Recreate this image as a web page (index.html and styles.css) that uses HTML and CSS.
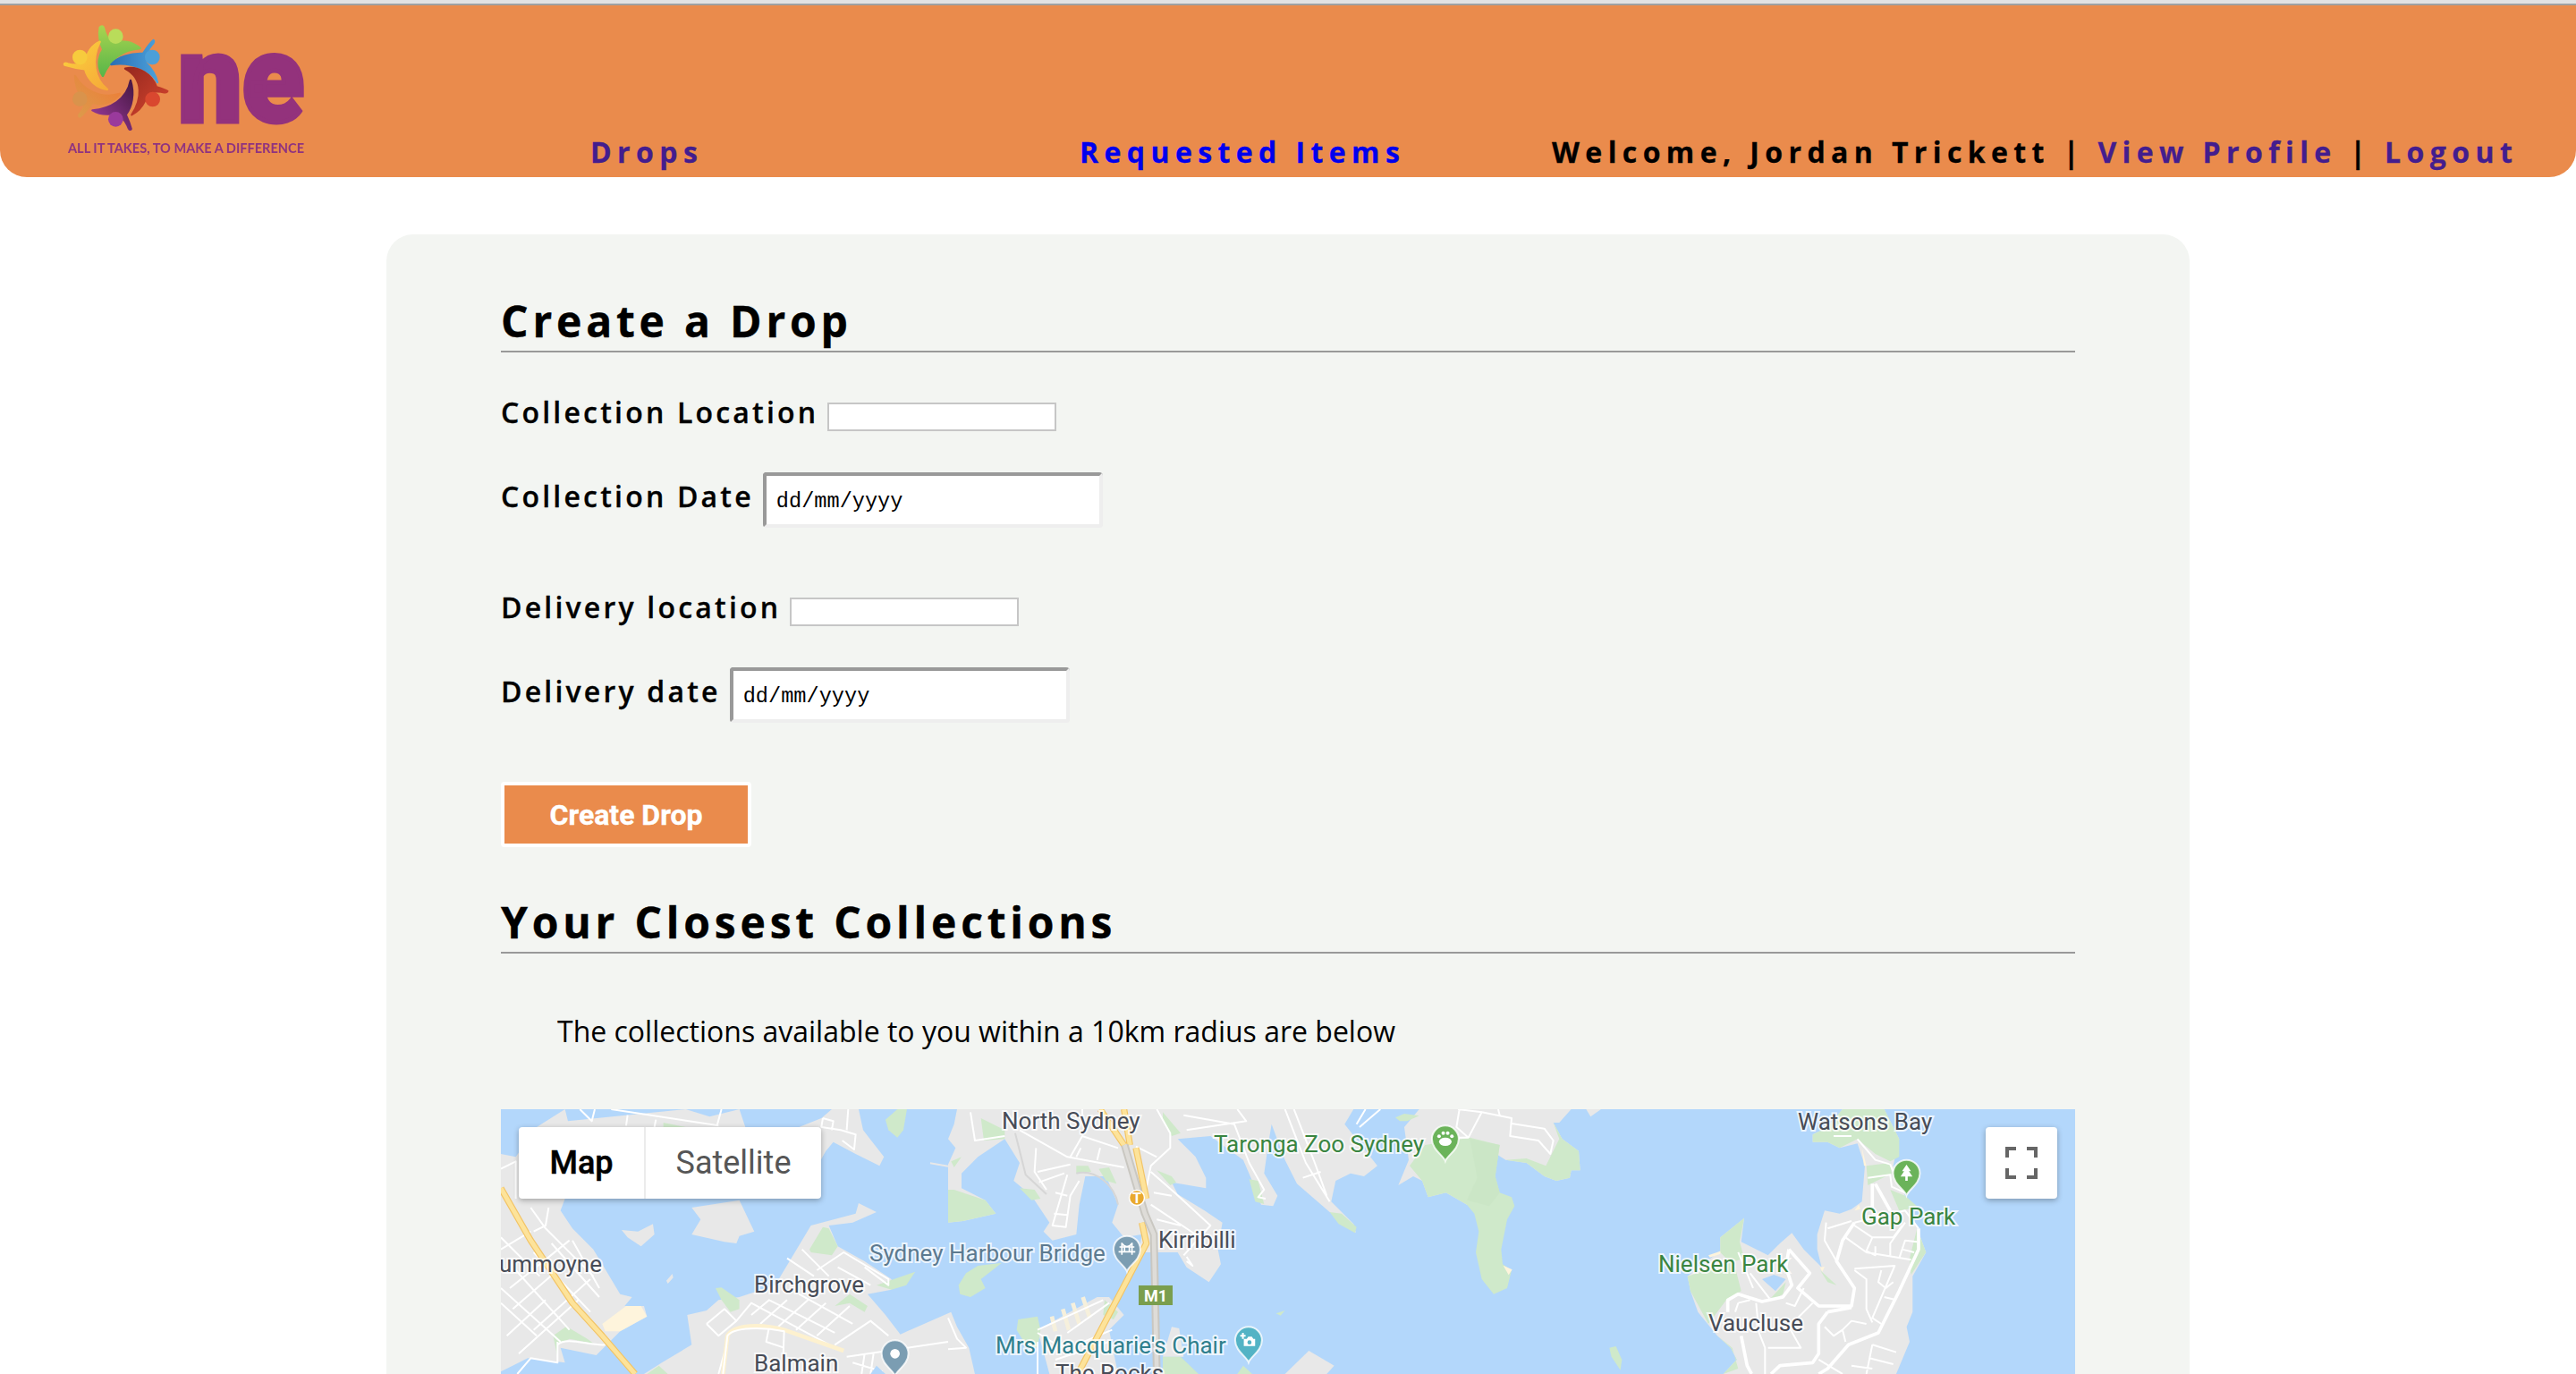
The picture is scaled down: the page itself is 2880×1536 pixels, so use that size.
FILE: index.html
```html
<!DOCTYPE html>
<html lang="en">
<head>
    <meta charset="UTF-8">
    <meta name="viewport" content="width=device-width, initial-scale=1.0">
    <title>Create a Drop</title>
    <link rel="stylesheet" href="styles.css">
</head>
<body>
    <div class="topline"></div>

    <header class="site-header">
        <a class="logo-cell" href="#">
            <svg class="logo" viewBox="60 26 290 150" width="290" height="150">
                <defs>
                    <linearGradient id="g-green" x1="0" y1="0" x2="0" y2="1"><stop offset="0" stop-color="#a8d34f"/><stop offset="1" stop-color="#58b649"/></linearGradient>
                    <linearGradient id="g-blue" x1="0" y1="0" x2="1" y2="0"><stop offset="0" stop-color="#2b6fb5"/><stop offset="1" stop-color="#4ba0da"/></linearGradient>
                    <linearGradient id="g-red" x1="0" y1="0" x2="1" y2="1"><stop offset="0" stop-color="#96281f"/><stop offset="1" stop-color="#d5452e"/></linearGradient>
                    <linearGradient id="g-purple" x1="1" y1="0" x2="0" y2="1"><stop offset="0" stop-color="#461743"/><stop offset="1" stop-color="#a03da0"/></linearGradient>
                    <linearGradient id="g-orange" x1="1" y1="0" x2="0" y2="1"><stop offset="0" stop-color="#ee7a35"/><stop offset="1" stop-color="#dc9b4c"/></linearGradient>
                    <linearGradient id="g-yellow" x1="0" y1="0" x2="1" y2="1"><stop offset="0" stop-color="#fbd23e"/><stop offset="1" stop-color="#f6a938"/></linearGradient>
                </defs>
                <g class="swirl" transform="translate(60 20) scale(.3333)">
                    <path fill="url(#g-green)" stroke="url(#g-green)" d="M155,32 C160,26 166,28 168,34 C172,55 180,72 198,86 C230,72 265,80 290,102 C245,105 195,125 165,195 C148,170 146,135 166,106 C155,85 150,55 155,32Z"/>
                    <circle cx="208" cy="62" r="25" fill="#b9dc5a"/>
                    <path fill="url(#g-blue)" stroke="url(#g-blue)" d="M193,156 C215,130 260,118 300,120 C310,105 320,88 335,75 C338,78 336,84 330,90 C318,102 310,120 308,150 C328,168 342,190 348,216 C330,180 270,145 193,156Z"/>
                    <circle cx="331" cy="132" r="25" fill="#4c9fd8"/>
                    <path fill="url(#g-red)" stroke="url(#g-red)" d="M240,170 C285,160 330,190 345,232 C358,236 372,240 382,246 C380,252 372,250 360,248 C335,244 318,250 305,280 C296,300 280,315 262,325 C295,275 305,205 240,170Z"/>
                    <circle cx="332" cy="273" r="25" fill="#d9472f"/>
                    <path fill="url(#g-purple)" stroke="url(#g-purple)" d="M258,210 C272,255 262,300 242,325 C250,342 256,358 260,372 C256,378 252,374 248,362 C240,342 225,325 195,322 C172,325 150,322 130,310 C190,305 245,275 258,210Z"/>
                    <circle cx="208" cy="340" r="25" fill="#9a3a9c"/>
                    <path fill="url(#g-orange)" stroke="url(#g-orange)" d="M222,255 C200,285 165,295 130,285 C118,300 105,318 88,332 C82,330 84,324 90,318 C102,305 106,292 100,275 C82,250 72,225 72,195 C95,235 150,275 222,255Z"/>
                    <circle cx="88" cy="272" r="25" fill="#d9934c"/>
                    <path fill="url(#g-yellow)" stroke="url(#g-yellow)" d="M155,80 C125,140 135,205 180,240 C145,235 115,210 105,172 C85,170 60,165 37,158 C33,152 40,151 48,154 C70,160 92,158 108,148 C110,118 128,92 155,80Z"/>
                    <circle cx="88" cy="132" r="25" fill="#f7cb3d"/>
                </g>
                <text class="logo-ne" x="199" y="136" textLength="141" lengthAdjust="spacingAndGlyphs">ne</text>
                <text class="logo-tag" x="76" y="171" textLength="264" lengthAdjust="spacingAndGlyphs">ALL IT TAKES, TO MAKE A DIFFERENCE</text>
            </svg>
        </a>
        <nav class="nav-cell nav-drops"><a class="visited" href="#">Drops</a></nav>
        <nav class="nav-cell nav-items"><a class="link" href="#">Requested Items</a></nav>
        <div class="nav-cell nav-user">Welcome, Jordan Trickett <span class="sep">|</span> <a class="visited" href="#">View Profile</a> <span class="sep">|</span> <a class="visited" href="#">Logout</a></div>
    </header>

    <main class="card">
        <h2>Create a Drop</h2>

        <form>
            <div class="field">
                <label>Collection Location</label>
                <input class="text-input" type="text">
            </div>
            <div class="field field-date">
                <label>Collection Date</label>
                <input class="date-input" type="text" value="dd/mm/yyyy">
            </div>
            <div class="field">
                <label>Delivery location</label>
                <input class="text-input" type="text">
            </div>
            <div class="field field-last">
                <label>Delivery date</label>
                <input class="date-input" type="text" value="dd/mm/yyyy">
            </div>
            <button class="btn" type="button">Create Drop</button>
        </form>

        <h2 class="closest">Your Closest Collections</h2>
        <p class="intro">The collections available to you within a 10km radius are below</p>

        <div class="map">
            <svg class="map-canvas" viewBox="0 0 1760 296" width="1760" height="296">
                <defs>
                    <path id="pin" d="M0,74 C-6,55 -45,36 -45,0 A45,45 0 1 1 45,0 C45,36 6,55 0,74Z"/>
                </defs>

                <!-- west side -->
                <g transform="scale(.3333)">
                    <path class="land" d="M215,0 L225,40 L620,0 L700,25 L800,0 L820,60 L1000,60 L1075,30 L1110,0 L1200,0 L1215,70 L1285,160 L1270,190 L1190,150 L1115,110 L1090,140 L1000,300 L215,300 L200,340 L240,400 L310,470 L340,520 L400,620 L440,630 L415,660 L480,660 L490,695 L400,745 L355,790 L320,825 L200,800 L215,850 L90,835 L0,880 L0,150 L50,160 L120,60Z"/>
                    <path class="land" d="M640,330 L800,305 L850,410 L800,425 L790,450 L750,445 L640,420 L670,370Z"/>
                    <path class="land" d="M405,405 L460,410 L510,385 L515,420 L470,460 L425,430Z"/>
                    <path class="land" d="M555,575 L575,552 L578,565 L560,585Z"/>
                    <path class="land" d="M480,888 L540,850 L640,790 L625,690 L690,675 L730,640 L800,630 L920,590 L1040,390 L1190,350 L1200,315 L1260,345 L1180,380 L1100,390 L1130,460 L1220,510 L1310,570 L1310,605 L1230,620 L1290,690 L1340,755 L1510,680 L1530,730 L1570,800 L1590,888Z"/>
                    <path class="park" d="M1035,470 L1080,395 L1100,400 L1130,460 L1110,490 L1040,480Z"/>
                    <path class="park" d="M720,600 L740,598 L800,640 L800,670 L770,680 L740,640Z"/>
                    <path class="park" d="M1120,660 L1170,620 L1230,660 L1220,680 L1170,650Z"/>
                    <path class="park" d="M1260,590 L1390,545 L1360,590 L1310,605Z"/>
                    <path class="park" d="M175,760 L220,728 L290,770 L310,785 L230,770 L190,790 L190,830Z"/>
                    <path class="park" d="M1290,35 L1330,0 L1362,0 L1350,70 L1330,95 L1300,70Z"/>
                    <path class="park" d="M545,45 L620,60 L545,60Z"/>
                    <path class="park" d="M490,888 L530,860 L560,888Z"/>
                    <path class="sand" d="M340,720 L420,660 L470,660 L490,695 L400,745 L350,745Z"/>
                    <path class="land" d="M1440,178 L1500,188 L1500,194 L1440,184Z"/>
                    <path class="roads" d="M265,0 L305,40 L315,0 M370,0 L730,55 M425,20 L420,55 M520,35 L515,60 M740,0 L725,55 M1080,30 L1075,60 L1140,70 L1190,85 L1185,135 L1145,105 M1080,30 L1115,40 L1110,70 M1165,0 L1160,70 M0,200 L50,175 L50,300 M100,330 L150,400 L220,470 L310,560 M0,430 L130,560 M0,600 L200,780 M0,650 L120,760 M50,540 L230,740 M110,480 L300,680 M170,450 L330,630 M240,440 L330,600 M230,440 L30,600 M100,410 L0,470 M300,570 L110,740 M260,640 L60,820 M190,540 L40,670 M150,640 L20,760 M160,330 L150,390 L110,410 M190,780 L190,850 L100,835 L55,888 M190,790 C220,760 300,795 350,790 M690,720 L750,670 L790,710 L730,760 L690,720 M790,710 L840,650 L1120,800 M840,690 L900,640 L1120,750 M870,720 L960,640 M930,730 L1030,640 M990,740 L1090,650 M1060,760 L1170,660 M1120,790 L1240,710 L1300,760 M1000,620 L1180,720 M1160,830 L1500,780 M1180,850 L1280,880 M960,500 L1050,560 M1010,470 L1100,560 M1060,540 L1150,480 L1300,570 L1300,590 L1220,530 M1130,530 L1240,590 M730,888 L760,780 M900,730 L890,780 L950,800 M1220,820 L1210,888 M1250,820 L1240,888"/>
                    <path class="hw-edge" d="M0,265 L100,440 L240,650 L340,760 L450,888"/>
                    <path class="hw" d="M0,265 L100,440 L240,650 L340,760 L450,888"/>
                    <path class="sand-road" d="M745,888 L760,760 C780,720 880,720 950,740 L1150,810"/>
                    <path class="roads" d="M745,888 L760,760 C780,730 880,730 950,745 L945,888"/>
                    <path class="water" d="M1240,888 L1290,888 L1260,860Z"/>
                </g>

                <!-- north sydney, bridge -->
                <g transform="translate(500 0) scale(.3333)">
                    <path class="land" d="M30,0 L20,50 L0,100 L25,130 L0,185 L0,380 L50,375 L160,350 L125,305 L45,265 L45,215 L100,160 L190,100 L240,180 L220,240 L280,290 L340,380 L320,410 L350,440 L430,420 L440,320 L460,225 L530,225 L570,320 L550,380 L590,430 L650,420 L640,480 L770,480 L800,530 L875,580 L915,520 L905,470 L920,380 L860,340 L770,285 L750,245 L865,265 L865,230 L830,160 L770,100 L880,90 L990,170 L1020,240 L1050,320 L1090,325 L1105,290 L1060,215 L1075,110 L1085,50 L1130,170 L1170,250 L1280,345 L1320,370 L1368,415 L1360,385 L1285,310 L1300,240 L1350,215 L1395,225 L1440,190 L1330,50 L1360,0Z"/>
                    <path class="land" d="M300,740 L500,630 L540,630 L590,690 L540,740 L570,888 L340,888Z"/>
                    <path class="land" d="M750,730 L775,735 L790,830 L720,830Z"/>
                    <path class="land" d="M1130,888 L1210,810 L1295,860 L1270,888Z"/>
                    <path class="park" d="M0,270 L20,270 L125,305 L160,350 L50,375 L0,380Z"/>
                    <path class="park" d="M110,30 L190,70 L190,100 L120,105Z"/>
                    <path class="park" d="M10,175 L45,160 L20,195Z"/>
                    <path class="park" d="M240,265 L290,270 L310,300 L280,305Z"/>
                    <path class="park" d="M430,190 L470,190 L480,210 L430,215Z"/>
                    <path class="park" d="M505,200 L540,195 L565,250 L530,240Z"/>
                    <path class="park" d="M700,205 L750,225 L765,245 L745,255Z"/>
                    <path class="park" d="M720,10 L780,80 L750,90 L720,40Z"/>
                    <path class="park" d="M1010,235 L1040,240 L1060,318 L1030,310Z"/>
                    <path class="park" d="M1280,345 L1320,350 L1370,395 L1365,415 L1310,385Z"/>
                    <path class="park" d="M35,590 L60,550 L100,525 L180,515 L110,570 L125,600 L75,630 L40,620Z"/>
                    <path class="park" d="M235,705 L300,695 L310,740 L300,800 L260,790 L230,740Z"/>
                    <path class="park" d="M525,640 L570,680 L555,705 L520,690Z"/>
                    <path class="park" d="M720,830 L780,830 L840,888 L720,888Z"/>
                    <path class="park" d="M970,888 L990,860 L1020,888Z"/>
                    <path class="park" d="M1100,685 L1130,675 L1115,692Z"/>
                    <path class="wharf" d="M348,695 L360,745 M385,670 L405,740 M418,650 L440,720 M452,630 L475,700"/>
                    <path class="grey-road" d="M225,80 L260,220 L330,285 M430,215 C500,200 560,260 570,320"/>
                    <path class="roads" d="M75,10 L90,105 L190,90 M240,70 L400,160 L590,195 M410,160 L450,90 L570,130 M295,130 L290,210 L330,270 M300,210 L410,185 M305,245 L390,215 M400,220 L350,390 L395,395 L410,290 L440,240 M360,280 L400,290 M355,350 L400,355 M510,130 L500,170 M445,130 L430,160 M700,0 L745,80 L745,130 L680,190 L660,290 M630,125 L700,160 M680,210 L760,280 L880,390 L790,490 M690,280 L750,290 M680,320 L830,420 M700,370 L780,390 M800,495 L820,525 L800,510 M790,20 L960,50 L1010,180 L1060,270 L1040,295 L1065,300 M800,70 L1000,40 L970,0 M1130,0 L1200,180 L1280,310 M1160,0 L1230,180 L1270,290 M1190,230 L1250,210 M1370,50 L1400,0 M1380,60 L1450,0 M300,740 L520,640 M300,750 L380,800 M300,780 L300,888 M400,750 L540,650 M0,700 L30,770 L60,800 L0,805 M430,790 L550,740 M360,840 L540,780 M450,30 L450,0"/>
                    <path class="hw-edge" d="M510,0 L590,120 M590,0 L610,120 M630,130 L665,300 M650,380 L665,450 L560,650 L435,888"/>
                    <path class="hw" d="M510,0 L590,120 M590,0 L610,120 M630,130 L665,300 M650,380 L665,450 L560,650 L435,888"/>
                    <path class="bridge-edge" d="M592,120 L660,350 L690,420 L700,888"/>
                    <path class="bridge" d="M592,120 L660,350 L690,420 L700,888"/>
                </g>

                <!-- taronga -->
                <g transform="translate(1000 0) scale(.3333)">
                    <path class="land" d="M0,0 L80,0 L30,60 L45,170 L10,255 L60,225 L90,240 L110,295 L170,280 L240,320 L300,125 L370,170 L440,180 L500,225 L540,240 L585,230 L590,205 L620,205 L615,140 L560,100 L530,45 L550,45 L590,0Z"/>
                    <path class="land" d="M640,0 L655,25 L690,0Z"/>
                    <path class="park" d="M0,28 L30,15 L80,22 L40,40 L15,40Z"/>
                    <path class="park" d="M48,190 L100,120 L250,95 L350,120 L335,225 L350,280 L390,295 L400,325 L375,370 L355,470 L360,520 L390,540 L375,600 L330,620 L290,570 L270,480 L280,410 L265,350 L240,320 L170,280 L110,295 L90,240Z"/>
                    <path class="park-dark" d="M250,100 L350,120 L335,225 L350,280 L315,325 L240,305 L275,230Z"/>
                    <path class="park" d="M370,170 L440,180 L500,225 L540,240 L585,230 L590,205 L620,205 L615,140 L560,100 L530,45 L550,100 L505,190 L440,165Z"/>
                    <path class="park" d="M718,800 L740,795 L760,840 L755,875 L725,830Z"/>
                    <path class="sand" d="M362,524 L392,538 L380,556Z"/>
                    <path class="roads" d="M215,0 L205,60 L245,95 L290,10 L210,0 M290,10 L390,30 L385,90 L480,105 L520,150 L530,105 L500,65 L390,48 M345,0 L350,20 M245,95 L210,95"/>
                </g>

                <!-- vaucluse -->
                <g transform="translate(1270 0) scale(.3333)">
                    <path class="land" d="M690,0 L640,60 L590,85 L590,110 L640,110 L680,130 L740,115 L765,190 L755,310 L720,335 L680,350 L630,340 L605,420 L605,470 L620,530 L560,470 L520,415 L480,450 L440,490 L350,445 L360,365 L280,430 L280,475 L170,560 L180,610 L205,680 L270,760 L315,800 L335,840 L290,888 L870,888 L915,780 L905,730 L925,680 L925,560 L970,480 L900,290 L860,190 L880,100 L830,0Z"/>
                    <path class="park" d="M590,85 L640,60 L690,0 L830,0 L880,100 L880,160 L850,175 L800,150 L740,100 L680,130 L640,110 L590,110Z"/>
                    <path class="park" d="M770,190 L850,180 L855,215 L775,255Z"/>
                    <path class="park" d="M850,270 L900,290 L945,330 L880,340Z"/>
                    <path class="park" d="M940,400 L970,480 L920,555 L915,500Z"/>
                    <path class="park" d="M360,365 L345,445 L360,500 L170,560 L180,610 L240,720 L300,640 L350,610 L330,530 L280,480 L280,430Z"/>
                    <path class="park" d="M270,760 L315,800 L335,840 L290,888 L340,870 L320,800Z"/>
                    <path class="park" d="M448,635 L500,580 L490,620 L455,640Z"/>
                    <path class="park" d="M615,540 L670,590 L640,580Z"/>
                    <path class="water" d="M420,570 L465,610 L500,570 L460,555Z"/>
                    <path class="sand" d="M240,490 L280,476 L280,485 L245,497Z"/>
                    <path class="sand" d="M615,530 L630,528 L622,545Z"/>
                    <path class="sand" d="M745,320 L750,335 L730,340Z"/>
                    <path class="sand" d="M755,130 L770,190 L762,190Z"/>
                    <path class="roads" d="M730,380 L900,340 L945,400 M775,230 L850,220 L855,260 L900,280 M740,100 L800,170 L850,185 L860,210 M660,90 L720,90 M635,380 L630,440 L670,510 M640,400 L720,375 M700,430 L770,480 L920,505 M730,390 L790,430 L770,475 L800,490 L800,460 M790,430 L860,430 L890,390 M850,490 L850,450 L900,380 M880,500 L900,440 L940,445 M890,470 L930,480 M730,535 L865,525 L790,700 L820,720 M730,540 L770,570 L770,670 L790,715 M820,540 L810,580 L835,600 L860,580 M830,630 L870,640 M690,740 L720,710 L770,720 M690,740 L700,780 M690,740 L660,760 L630,730 M790,790 L870,815 M780,835 L860,855 M790,790 L770,888 M400,650 L410,750 L430,800 L430,888 M340,650 L380,640 M340,650 L330,680 M500,650 L530,660 L560,600 M590,650 L510,730 L550,800 L440,800 M380,550 L445,635 M340,480 L390,600 M610,840 L690,888 M720,860 L790,870"/>
                    <path class="roads-main" d="M510,470 L580,550 L540,600 L610,660 L720,660 L730,600 L670,510 L690,440 L730,380 M510,470 L500,530 L520,590 L490,630 L420,645 L340,620 L305,640 L305,680 M640,680 L610,720 L610,820 L590,850 L480,860 L450,888 M640,680 L720,665 M945,400 L945,470 L880,610 L810,750 L710,790 L640,870 L610,888 M800,250 L850,340 M790,250 L790,330 M350,760 L370,860 L385,888"/>
                </g>

                <!-- pins -->
                <g transform="scale(.3333)">
                    <use href="#pin" class="pin pin-grey" x="1322" y="820"/>
                    <circle cx="1322" cy="820" r="16" class="white"/>
                    <use href="#pin" class="pin pin-grey" x="2100" y="470"/>
                    <path class="pin-mark" d="M2075,462 H2125 M2072,478 H2128 M2083,448 V488 M2117,448 V488 M2083,450 Q2100,472 2117,450 M2092,460 V478 M2108,460 V478"/>
                    <use href="#pin" class="pin pin-teal" x="2508" y="775"/>
                    <path class="white" d="M2492,770 h10 l5,-7 h12 l5,7 h6 v24 h-38Z M2480,757 h6 v-7 h6 v7 h6 v6 h-6 v7 h-6 v-7 h-6Z"/>
                    <circle cx="2511" cy="782" r="7" class="pin-teal"/>
                    <use href="#pin" class="pin pin-green" x="3168" y="100"/>
                    <ellipse cx="3168" cy="109" rx="21" ry="14" class="white"/>
                    <circle cx="3147" cy="91" r="6" class="white"/><circle cx="3161" cy="80" r="6" class="white"/><circle cx="3176" cy="80" r="6" class="white"/><circle cx="3190" cy="91" r="6" class="white"/>
                    <use href="#pin" class="pin pin-green" x="4715" y="215"/>
                    <path class="white" d="M4715,186 L4730,208 H4723 L4735,226 H4719 V240 H4711 V226 H4695 L4707,208 H4700Z"/>
                </g>
                <circle class="t-badge" cx="711" cy="99" r="8.5"/>
                <text class="t-text" x="711" y="105">T</text>
                <rect class="m1-sign" x="713" y="197" width="38" height="22"/>
                <text class="m1-text" x="732" y="215">M1</text>

                <!-- labels -->
                <text class="lbl" text-anchor="end" x="113" y="182">Drummoyne</text>
                <text class="lbl" x="283" y="205">Birchgrove</text>
                <text class="lbl" x="283" y="293">Balmain</text>
                <text class="lbl lbl-poi" x="412" y="170">Sydney Harbour Bridge</text>
                <text class="lbl" x="560" y="22">North Sydney</text>
                <text class="lbl" x="735" y="155">Kirribilli</text>
                <text class="lbl lbl-park" x="797" y="48">Taronga Zoo Sydney</text>
                <text class="lbl lbl-teal" x="553" y="273">Mrs Macquarie's Chair</text>
                <text class="lbl" x="620" y="304">The Rocks</text>
                <text class="lbl" x="1450" y="23">Watsons Bay</text>
                <text class="lbl lbl-park" x="1521" y="129">Gap Park</text>
                <text class="lbl lbl-park" x="1294" y="182">Nielsen Park</text>
                <text class="lbl" x="1350" y="248">Vaucluse</text>
            </svg>

            <div class="map-type">
                <span class="map-type-btn active">Map</span>
                <span class="map-type-btn">Satellite</span>
            </div>
            <div class="map-full">
                <svg viewBox="0 0 18 18" width="36" height="36"><path d="M0 0v6h2V2h4V0H0zm16 0h-4v2h4v4h2V0h-2zm0 16h-4v2h6v-6h-2v4zM2 12H0v6h6v-2H2v-4z"/></svg>
            </div>
        </div>
    </main>
</body>
</html>
```

FILE: styles.css
```css
* {
    margin: 0;
    padding: 0;
    box-sizing: border-box;
}

html,
body {
    height: 100vh;
    overflow: hidden;
}

body {
    font-family: 'Open Sans', sans-serif;
    background: #fff;
    color: #000;
}

.topline {
    height: 6px;
    background: #e2e2e2;
    border-bottom: 2px solid #a0a0a0;
}

/* Header */
.site-header {
    display: flex;
    height: 192px;
    background: #ea8b4c;
    border-radius: 0 0 30px 30px;
    font-size: 32px;
    font-weight: 700;
    letter-spacing: 6.4px;
    line-height: 40px;
    -webkit-text-stroke: 0.3px;
}

.logo-cell {
    width: 660px;
    padding: 20px 0 0 60px;
}

.logo {
    display: block;
    filter: blur(0.5px);
}

.swirl path {
    stroke-width: 7;
    stroke-linejoin: round;
}

.logo-ne {
    font-family: Roboto, sans-serif;
    font-size: 138px;
    font-weight: 900;
    letter-spacing: 0;
    fill: #93327c;
    stroke: #93327c;
    stroke-width: 5px;
}

.logo-tag {
    font-family: Lato, sans-serif;
    font-size: 16px;
    font-weight: 700;
    letter-spacing: 0;
    fill: #8f3380;
}

.nav-cell {
    align-self: flex-end;
    padding-bottom: 8px;
    white-space: nowrap;
}

.nav-drops {
    width: 547px;
}

.nav-items {
    width: 528px;
}

.site-header a {
    text-decoration: none;
}

.visited {
    color: #431d8e;
}

.link {
    color: #0000ee;
}

/* Card */
.card {
    width: 70%;
    margin: 64px auto 0;
    padding: 67px 128px 60px;
    background: #f3f5f2;
    border-radius: 30px;
}

h2 {
    font-size: 48px;
    font-weight: 700;
    letter-spacing: 4.8px;
    line-height: 60px;
    padding-bottom: 3px;
    border-bottom: 2px solid #999;
    margin-bottom: 47px;
    -webkit-text-stroke: 0.4px;
}

.field {
    display: flex;
    align-items: center;
    gap: 10px;
    margin-bottom: 38px;
}

.field-date {
    margin-bottom: 69px;
}

.field-last {
    margin-bottom: 66px;
}

.field label {
    font-size: 32px;
    font-weight: 600;
    letter-spacing: 3.2px;
    line-height: 40px;
    padding-bottom: 9px;
    white-space: nowrap;
    -webkit-text-stroke: 0.3px;
}

.text-input {
    width: 256px;
    height: 32px;
    background: #fff;
    border: 2px solid #c6c6c6;
}

.date-input {
    width: 380px;
    height: 62px;
    padding: 2px 0 0 11px;
    font-family: 'Liberation Mono', monospace;
    font-size: 23.6px;
    color: #000;
    background: #fff;
    border: 4px solid;
    border-color: #999 #eee #eee #999;
    border-radius: 4px;
}

.btn {
    display: block;
    width: 280px;
    height: 73px;
    font-family: Roboto, sans-serif;
    font-size: 32px;
    font-weight: 700;
    color: #fff;
    background: #ea8b4c;
    border: 4px solid #fff;
    border-radius: 4px;
    -webkit-text-stroke: 0.4px;
}

.closest {
    margin-top: 54px;
    margin-bottom: 0;
}

.intro {
    font-size: 32px;
    line-height: 44px;
    padding-left: 63px;
    margin: 65px 0;
}

/* Map */
.map {
    position: relative;
    height: 296px;
    overflow: hidden;
    background: #b3d7fb;
}

.map-canvas {
    display: block;
}

.land {
    fill: #e8e8e8;
}

.water {
    fill: #b3d7fb;
}

.park {
    fill: #cfe9ca;
}

.park-dark {
    fill: #cbe6c6;
}

.sand {
    fill: #fef4dc;
}

.roads,
.roads-main,
.grey-road,
.hw,
.hw-edge,
.bridge,
.bridge-edge,
.sand-road,
.wharf {
    fill: none;
    stroke-linejoin: round;
}

.roads {
    stroke: #fff;
    stroke-width: 6;
}

.roads-main {
    stroke: #fff;
    stroke-width: 11;
}

.grey-road {
    stroke: #d6d6d6;
    stroke-width: 6;
}

.wharf {
    stroke: #f6f0dc;
    stroke-width: 14;
}

.sand-road {
    stroke: #fdf1cf;
    stroke-width: 14;
}

.hw-edge {
    stroke: #f2c466;
    stroke-width: 22;
}

.hw {
    stroke: #fde39a;
    stroke-width: 15;
}

.bridge-edge {
    stroke: #c9c7c1;
    stroke-width: 26;
}

.bridge {
    stroke: #dedcd8;
    stroke-width: 14;
}

.pin {
    stroke: #fff;
    stroke-width: 6;
    stroke-opacity: 0.8;
}

.pin-grey {
    fill: #7b9db2;
}

.pin-teal {
    fill: #53b3c5;
}

.pin-green {
    fill: #6bb35a;
}

.white {
    fill: #fff;
}

.pin-mark {
    fill: none;
    stroke: #fff;
    stroke-width: 5;
}

.t-badge {
    fill: #e9a92f;
    stroke: #fff;
    stroke-width: 1.5;
}

.t-text,
.m1-text {
    font-family: Roboto, sans-serif;
    font-weight: 700;
    fill: #fff;
    text-anchor: middle;
}

.t-text {
    font-size: 16px;
}

.m1-text {
    font-size: 18px;
}

.m1-sign {
    fill: #7a9e4e;
}

.lbl {
    font-family: Roboto, sans-serif;
    font-size: 26px;
    fill: #474c57;
    stroke: #fff;
    stroke-width: 4px;
    stroke-opacity: 0.75;
    paint-order: stroke;
}

.lbl-poi {
    fill: #5c7a90;
}

.lbl-park {
    fill: #3a8541;
}

.lbl-teal {
    fill: #2f7f8d;
}

.map-type {
    position: absolute;
    top: 20px;
    left: 20px;
    display: flex;
    height: 80px;
    background: #fff;
    border-radius: 4px;
    box-shadow: 0 2px 6px rgba(0, 0, 0, 0.3);
}

.map-type-btn {
    display: flex;
    align-items: center;
    justify-content: center;
    width: 198px;
    font-family: Roboto, sans-serif;
    font-size: 36px;
    color: #565656;
    border-left: 2px solid #ececec;
}

.map-type-btn.active {
    width: 140px;
    font-weight: 500;
    color: #000;
    border-left: 0;
    -webkit-text-stroke: 0.5px;
}

.map-full {
    position: absolute;
    top: 20px;
    right: 20px;
    display: flex;
    align-items: center;
    justify-content: center;
    width: 80px;
    height: 80px;
    background: #fff;
    border-radius: 4px;
    box-shadow: 0 2px 6px rgba(0, 0, 0, 0.3);
}

.map-full path {
    fill: #666;
}
```
